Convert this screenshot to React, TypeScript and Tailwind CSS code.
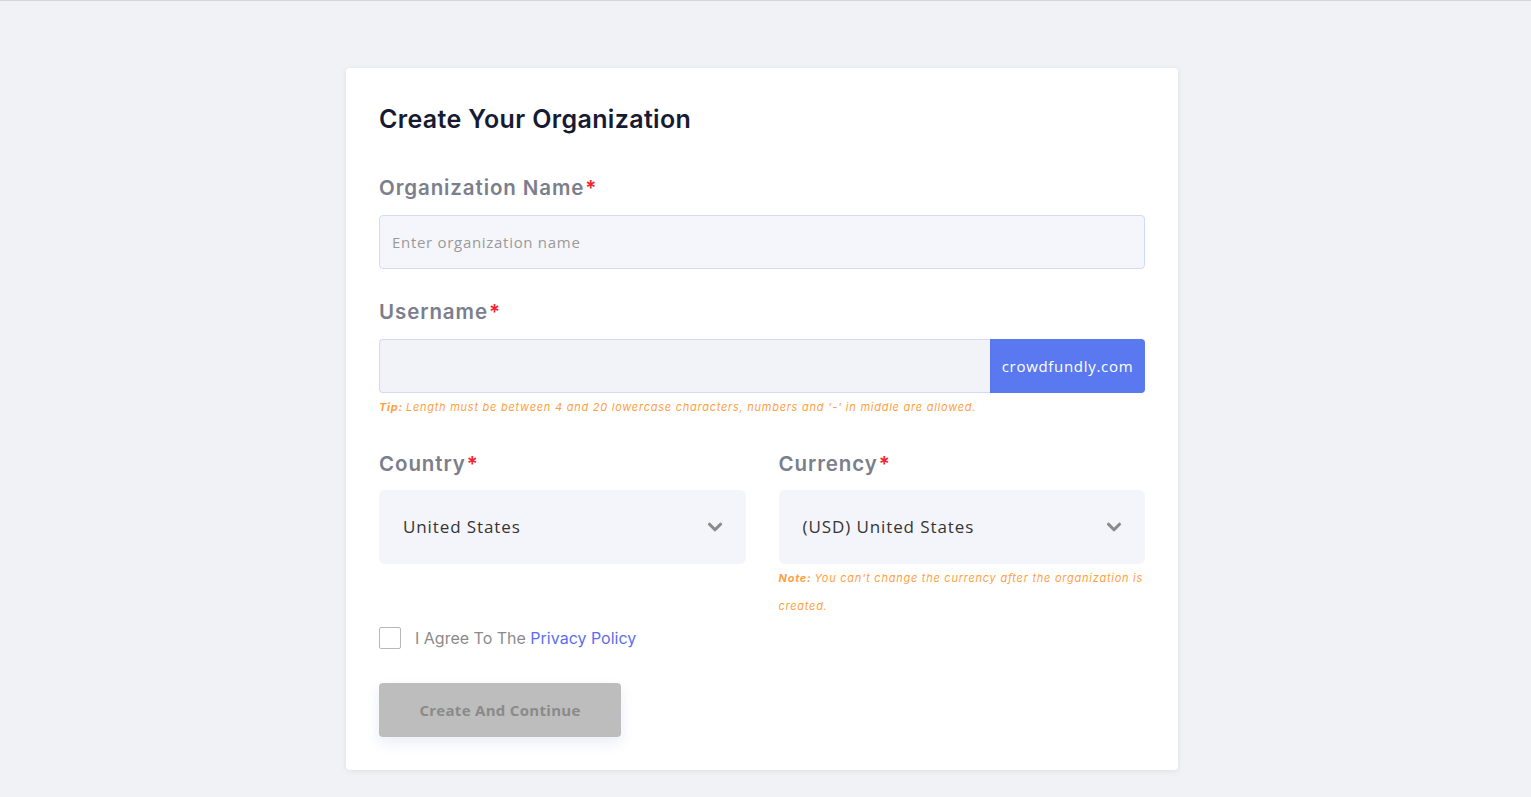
import { ChevronDown } from 'lucide-react'

const heading = "font-['Inter','Noto_Sans',sans-serif]"
const body = "font-['Open_Sans','Noto_Sans',sans-serif]"

function Label({ children }: { children: string }) {
  return (
    <label className={`${heading} block text-[20.5px] leading-[28px] font-semibold text-[#7b7e8c] tracking-[0.9px]`}>
      {children}
      <span className="text-[#f5222d] ml-[1px]">*</span>
    </label>
  )
}

function Select({ value }: { value: string }) {
  return (
    <div className="flex items-center justify-between h-[74px] rounded-md bg-[#f4f5fb] pl-6 pr-5">
      <span className={`${body} text-[17px] text-[#343434] tracking-[0.9px]`}>{value}</span>
      <ChevronDown className="w-[22px] h-[22px] text-[#8a8a8a]" strokeWidth={3.4} />
    </div>
  )
}

export default function App() {
  return (
    <div className="min-h-screen bg-[#f1f2f6] border-t border-[#d4d6da] pt-[67px] pb-[26px] pr-[7px]">
      <div className="mx-auto w-[832px] bg-white rounded shadow-[0_1px_6px_rgba(0,0,0,0.08)] px-[33px] pt-[35px] pb-[33px]">
        <h1 className={`${heading} text-[25px] leading-[32px] font-semibold text-[#161b33] tracking-[0.35px]`}>
          Create Your Organization
        </h1>

        <div className="mt-[39px]">
          <Label>Organization Name</Label>
          <input
            type="text"
            placeholder="Enter organization name"
            className={`${body} mt-[13px] w-full h-[54px] px-3 rounded bg-[#f5f6fb] border border-[#d3daf5] text-[15px] tracking-[0.7px] placeholder-[#9a9a9a] focus:outline-none`}
          />
        </div>

        <div className="mt-[29px]">
          <Label>Username</Label>
          <div className="mt-[13px] flex h-[54px]">
            <input
              type="text"
              className={`${body} flex-1 h-full px-3 rounded-l bg-[#f2f3f8] border border-r-0 border-[#d3daf5] text-[15px] focus:outline-none`}
            />
            <div className={`${body} w-[155px] flex items-center justify-center bg-[#5a79f0] text-white text-[15px] tracking-[0.7px] rounded-r`}>
              crowdfundly.com
            </div>
          </div>
          <p className={`${heading} mt-[6px] text-[11px] leading-[16px] italic text-[#ff9f43] tracking-[0.75px]`}>
            <span className="font-bold pr-[3px]">Tip:</span>Length must be between 4 and 20 lowercase characters, numbers and '-' in middle are allowed.
          </p>
        </div>

        <div className="mt-[35px] grid grid-cols-2 gap-x-[33px]">
          <div>
            <Label>Country</Label>
            <div className="mt-[12px]">
              <Select value="United States" />
            </div>
          </div>
          <div>
            <Label>Currency</Label>
            <div className="mt-[12px]">
              <Select value="(USD) United States" />
            </div>
            <div className={`${heading} text-[11px] leading-[28px] italic text-[#ff9f43] tracking-[0.75px]`}>
              <p>
                <span className="font-bold pr-[3px]">Note:</span>You can't change the currency after the organization is
              </p>
              <p>created.</p>
            </div>
          </div>
        </div>

        <div className="mt-[4px] flex items-center h-[28px]">
          <input type="checkbox" className="appearance-none w-[22px] h-[22px] border border-[#b8b8b8] rounded-[2px] bg-white" />
          <span className={`${heading} ml-[14px] text-[16px] text-[#8b8b8b]`}>
            I Agree To The <a href="#" className="text-[#5a6ff0]">Privacy Policy</a>
          </span>
        </div>

        <button
          type="button"
          disabled
          className={`${body} mt-[31px] w-[242px] h-[54px] rounded bg-[#bdbdbd] text-[#8a8a8a] text-[15px] font-bold tracking-[0.3px] shadow-[0_6px_14px_rgba(90,110,200,0.12)]`}
        >
          Create And Continue
        </button>
      </div>
    </div>
  )
}
